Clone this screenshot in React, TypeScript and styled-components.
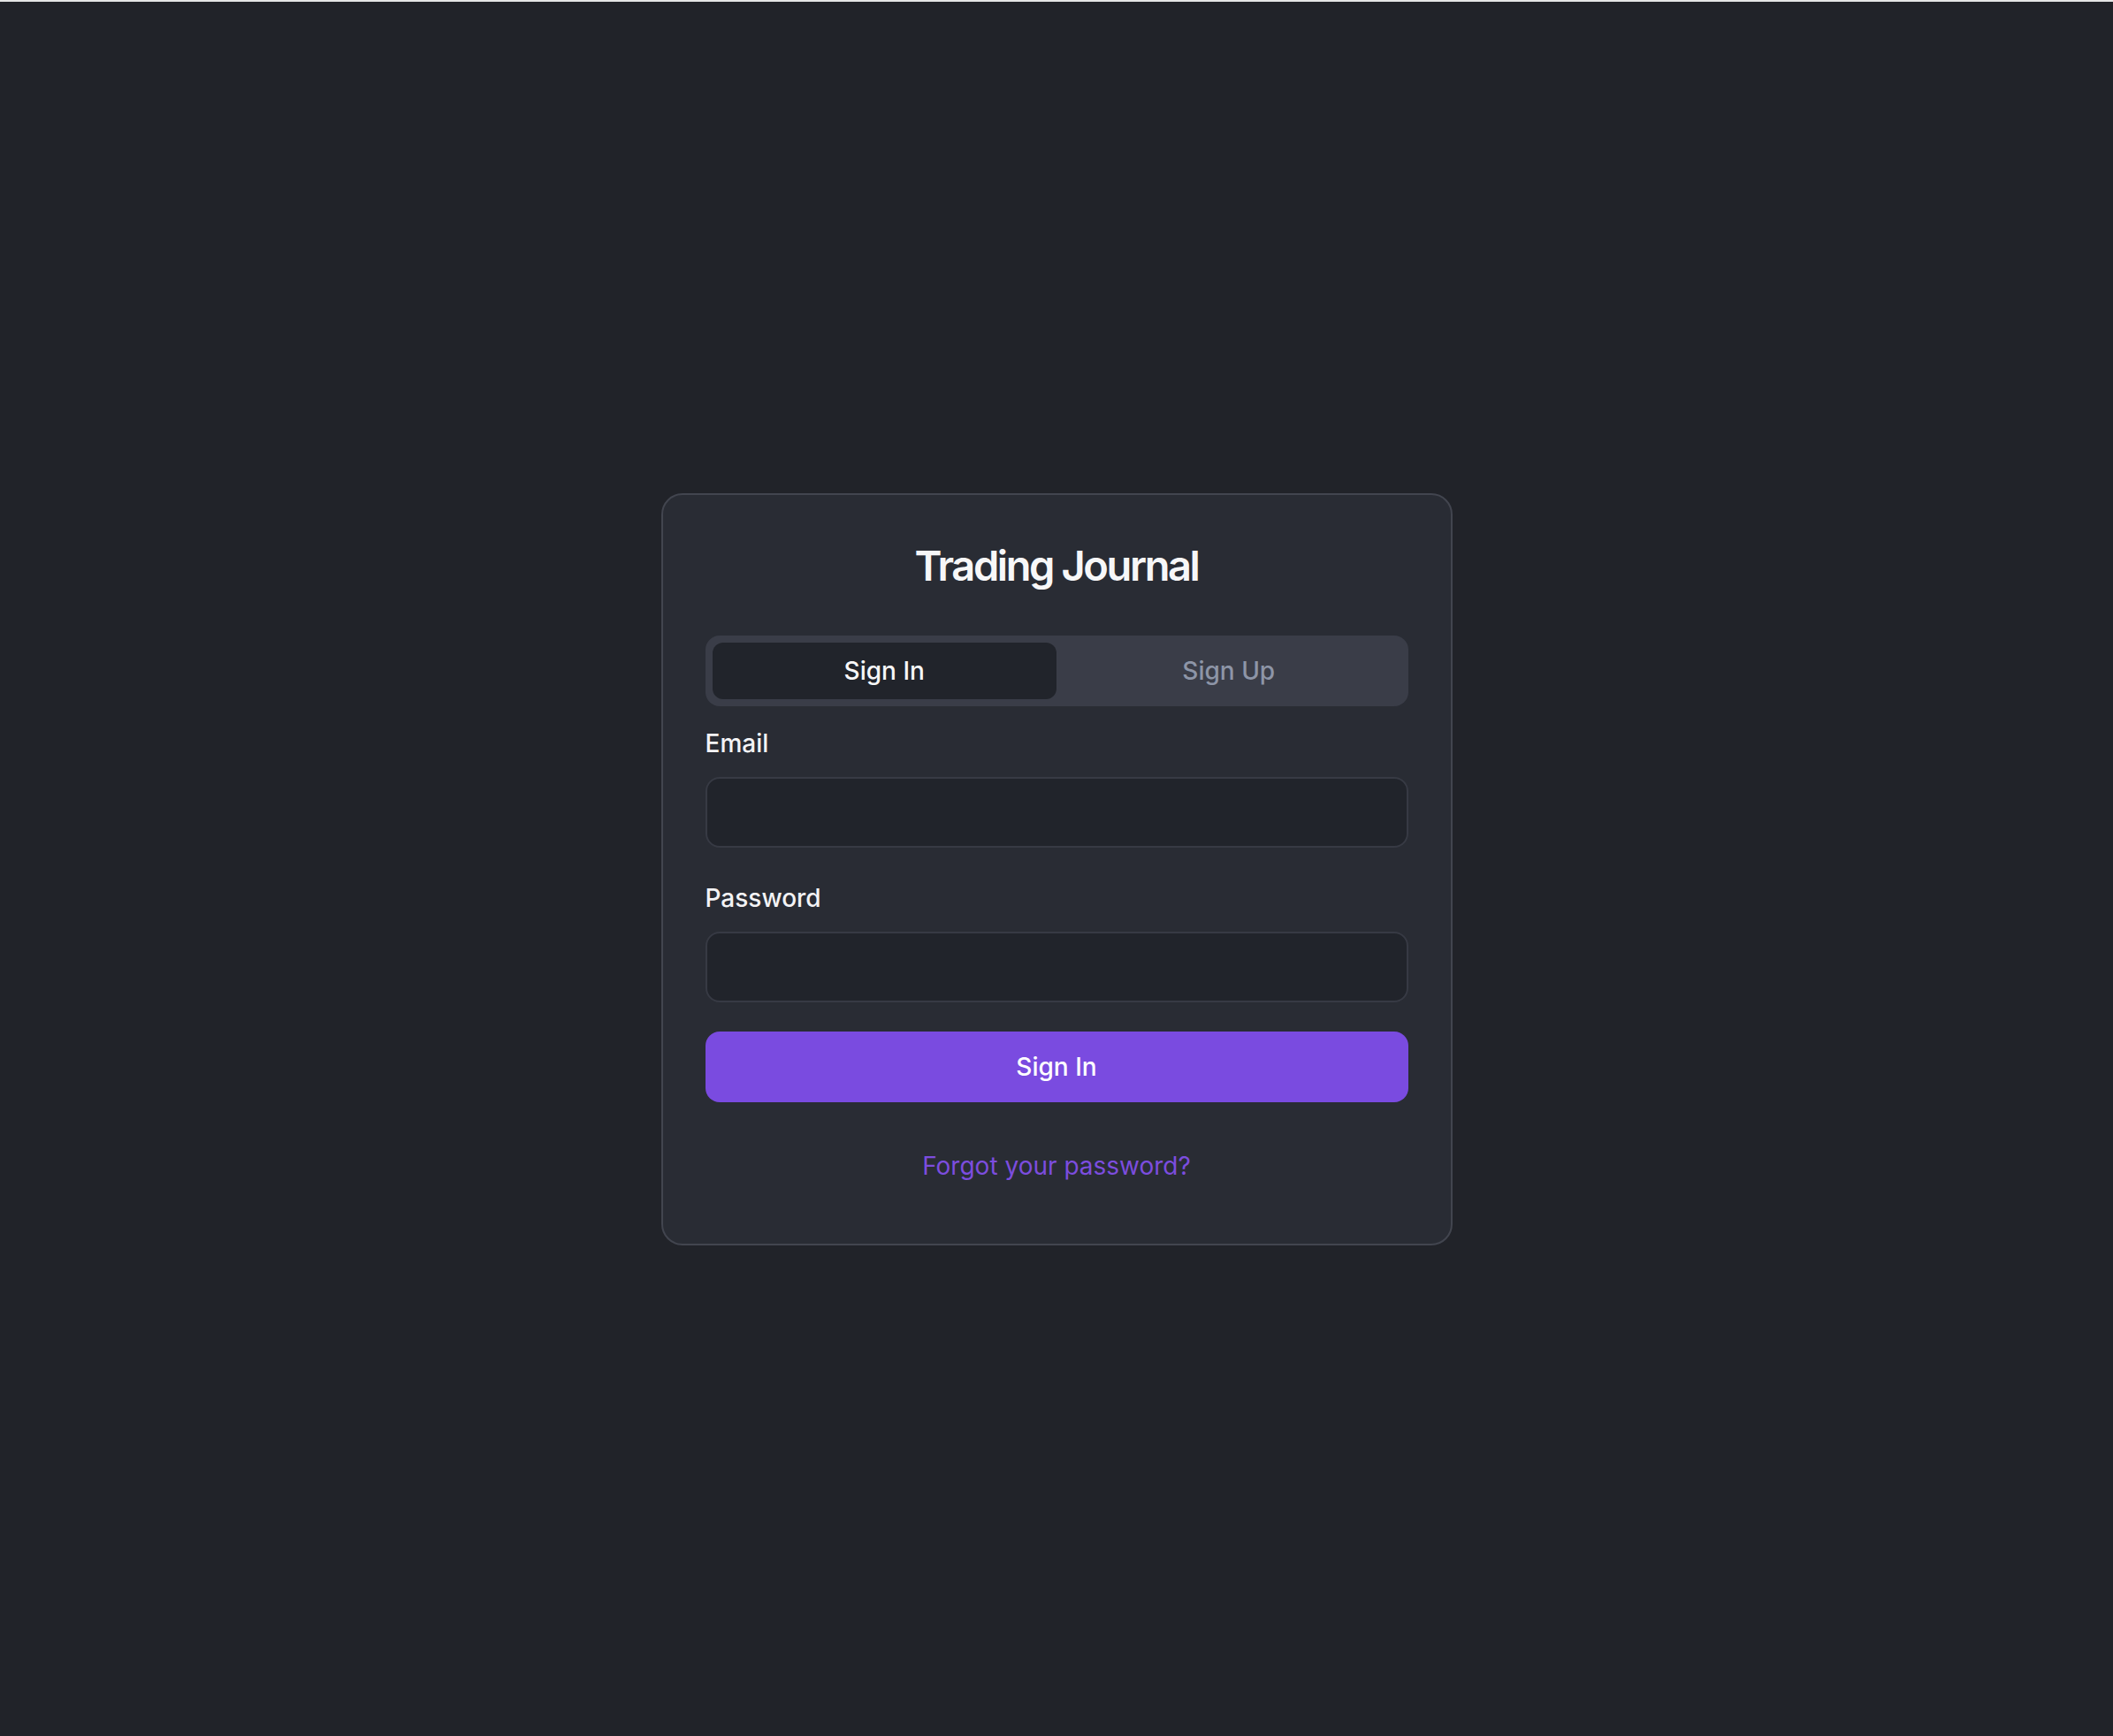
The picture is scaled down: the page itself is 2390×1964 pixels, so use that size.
import React from "react";
import styled, { createGlobalStyle } from "styled-components";

const GlobalStyle = createGlobalStyle`
  * { box-sizing: border-box; }
  html, body { margin: 0; padding: 0; background: #212329; }
  body { font-family: Inter, "Noto Sans", "Liberation Sans", sans-serif; -webkit-font-smoothing: antialiased; }
`;

const Page = styled.div`
  min-height: 100vh;
  display: flex;
  align-items: center;
  justify-content: center;
  background: #212329;
  border-top: 2px solid #e6e6e6;
`;

const Card = styled.div`
  width: 895px;
  background: #292c34;
  border: 2px solid #42454f;
  border-radius: 24px;
  padding: 48px 48px 68px;
  display: flex;
  flex-direction: column;
`;

const Title = styled.h1`
  margin: 0 0 47px;
  font-size: 47px;
  line-height: 64px;
  font-weight: 600;
  letter-spacing: -2.4px;
  color: #f7f7f8;
  text-align: center;
`;

const TabList = styled.div`
  display: grid;
  grid-template-columns: 1fr 1fr;
  height: 80px;
  padding: 8px;
  background: #3a3d48;
  border-radius: 16px;
  margin-bottom: 28px;
`;

const Tab = styled.button<{ $active?: boolean }>`
  border: none;
  border-radius: 12px;
  font-family: inherit;
  font-size: 28px;
  line-height: 40px;
  font-weight: 500;
  cursor: pointer;
  background: ${(p) => (p.$active ? "#21242b" : "transparent")};
  color: ${(p) => (p.$active ? "#f7f7f8" : "#8d95a7")};
`;

const Field = styled.div<{ $gap: number }>`
  display: flex;
  flex-direction: column;
  gap: 24px;
  margin-bottom: ${(p) => p.$gap}px;
`;

const Label = styled.label`
  font-size: 28px;
  line-height: 28px;
  font-weight: 500;
  color: #f3f3f5;
`;

const Input = styled.input`
  height: 80px;
  width: 100%;
  background: #21242b;
  border: 2px solid #373a44;
  border-radius: 16px;
  padding: 0 24px;
  color: #f3f3f5;
  font-family: inherit;
  font-size: 28px;
  outline: none;
`;

const SubmitButton = styled.button`
  height: 80px;
  width: 100%;
  border: none;
  border-radius: 16px;
  background: #7a4be0;
  color: #ffffff;
  font-family: inherit;
  font-size: 28px;
  font-weight: 500;
  cursor: pointer;
`;

const ForgotLink = styled.a`
  margin-top: 52px;
  text-align: center;
  font-size: 28px;
  line-height: 40px;
  color: #7c4ddf;
  text-decoration: none;
  cursor: pointer;
`;

export default function App() {
  return (
    <>
      <GlobalStyle />
      <Page>
        <Card>
          <Title>Trading Journal</Title>
          <TabList>
            <Tab $active>Sign In</Tab>
            <Tab>Sign Up</Tab>
          </TabList>
          <Field $gap={43}>
            <Label>Email</Label>
            <Input type="email" />
          </Field>
          <Field $gap={33}>
            <Label>Password</Label>
            <Input type="password" />
          </Field>
          <SubmitButton>Sign In</SubmitButton>
          <ForgotLink>Forgot your password?</ForgotLink>
        </Card>
      </Page>
    </>
  );
}
